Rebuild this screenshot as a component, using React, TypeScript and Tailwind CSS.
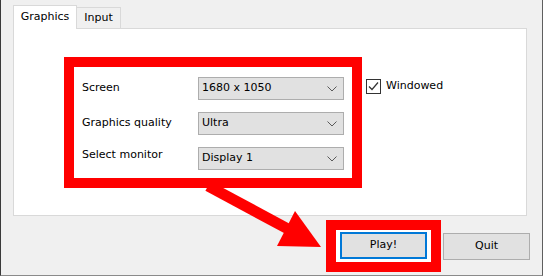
import { ChevronDown } from 'lucide-react';

function Combo({ value }: { value: string }) {
  return (
    <div className="flex h-[23px] w-[146px] items-center justify-between border border-[#adadad] bg-[#e1e1e1] pl-[3px] pr-[6px]">
      <span>{value}</span>
      <svg width="10" height="6" viewBox="0 0 10 6" className="text-[#5a5a5a]">
        <path d="M0.5 0.5 L5 5 L9.5 0.5" fill="none" stroke="currentColor" strokeWidth="1" />
      </svg>
    </div>
  );
}

function Row({ label, value, lift }: { label: string; value: string; lift?: boolean }) {
  return (
    <div className="flex items-center">
      <span className={lift ? 'mb-[6px] w-[116px]' : 'w-[116px]'}>{label}</span>
      <Combo value={value} />
    </div>
  );
}

export default function App() {
  void ChevronDown;
  return (
    <div className="relative h-[276px] w-[543px] overflow-hidden border-b border-l border-r border-b-[#8a8a8a] border-l-[#3a3a3a] border-r-[#5f5f5f] bg-[#f0f0f0] font-['DejaVu_Sans',sans-serif] text-[11px] text-black">
      {/* tabs */}
      <div className="ml-[12px] flex items-end pt-[5px]">
        <div className="relative z-10 -mb-px flex h-[24px] w-[64px] items-center justify-center border border-b-0 border-[#d9d9d9] bg-white pb-[1px]">
          Graphics
        </div>
        <div className="flex h-[21px] w-[44px] items-center justify-center border border-b-0 border-l-0 border-[#d9d9d9] bg-[#f0f0f0] pt-[1px]">
          Input
        </div>
      </div>

      {/* tab page */}
      <div className="ml-[12px] h-[188px] w-[514px] border border-[#d9d9d9] bg-white">
        <div className="flex items-start pl-[50px] pt-[28px]">
          <div className="flex h-[131px] w-[298px] flex-col gap-[12px] border-[10px] border-[#ff0000] pl-[8px] pt-[10px]">
            <Row label="Screen" value="1680 x 1050" />
            <Row label="Graphics quality" value="Ultra" />
            <Row label="Select monitor" value="Display 1" lift />
          </div>
          <label className="ml-[4px] mt-[21px] flex items-center gap-[5px]">
            <span className="flex h-[15px] w-[15px] items-center justify-center border border-[#333333] bg-white">
              <svg width="13" height="13" viewBox="0 0 13 13">
                <path d="M2 6.5 L5 9.5 L11 2.5" fill="none" stroke="#333333" strokeWidth="1.2" />
              </svg>
            </span>
            <span>Windowed</span>
          </label>
        </div>
      </div>

      {/* buttons */}
      <div className="ml-[325px] mt-[4px] flex items-center">
        <div className="border-[10px] border-[#ff0000] bg-white px-[4px] pb-[3px] pt-[2px]">
          <button className="flex h-[27px] w-[87px] items-center justify-center border-2 border-[#0078d7] bg-[#e1e1e1]">
            Play!
          </button>
        </div>
        <button className="ml-[2px] flex h-[27px] w-[87px] items-center justify-center border border-[#adadad] bg-[#e1e1e1]">
          Quit
        </button>
      </div>

      {/* annotation arrow */}
      <svg className="pointer-events-none absolute left-0 top-0" width="543" height="276" viewBox="0 0 543 276">
        <line x1="207" y1="186" x2="287" y2="229" stroke="#ff0000" strokeWidth="11" />
        <polygon points="276,246 294,211 320,247" fill="#ff0000" />
      </svg>
    </div>
  );
}
